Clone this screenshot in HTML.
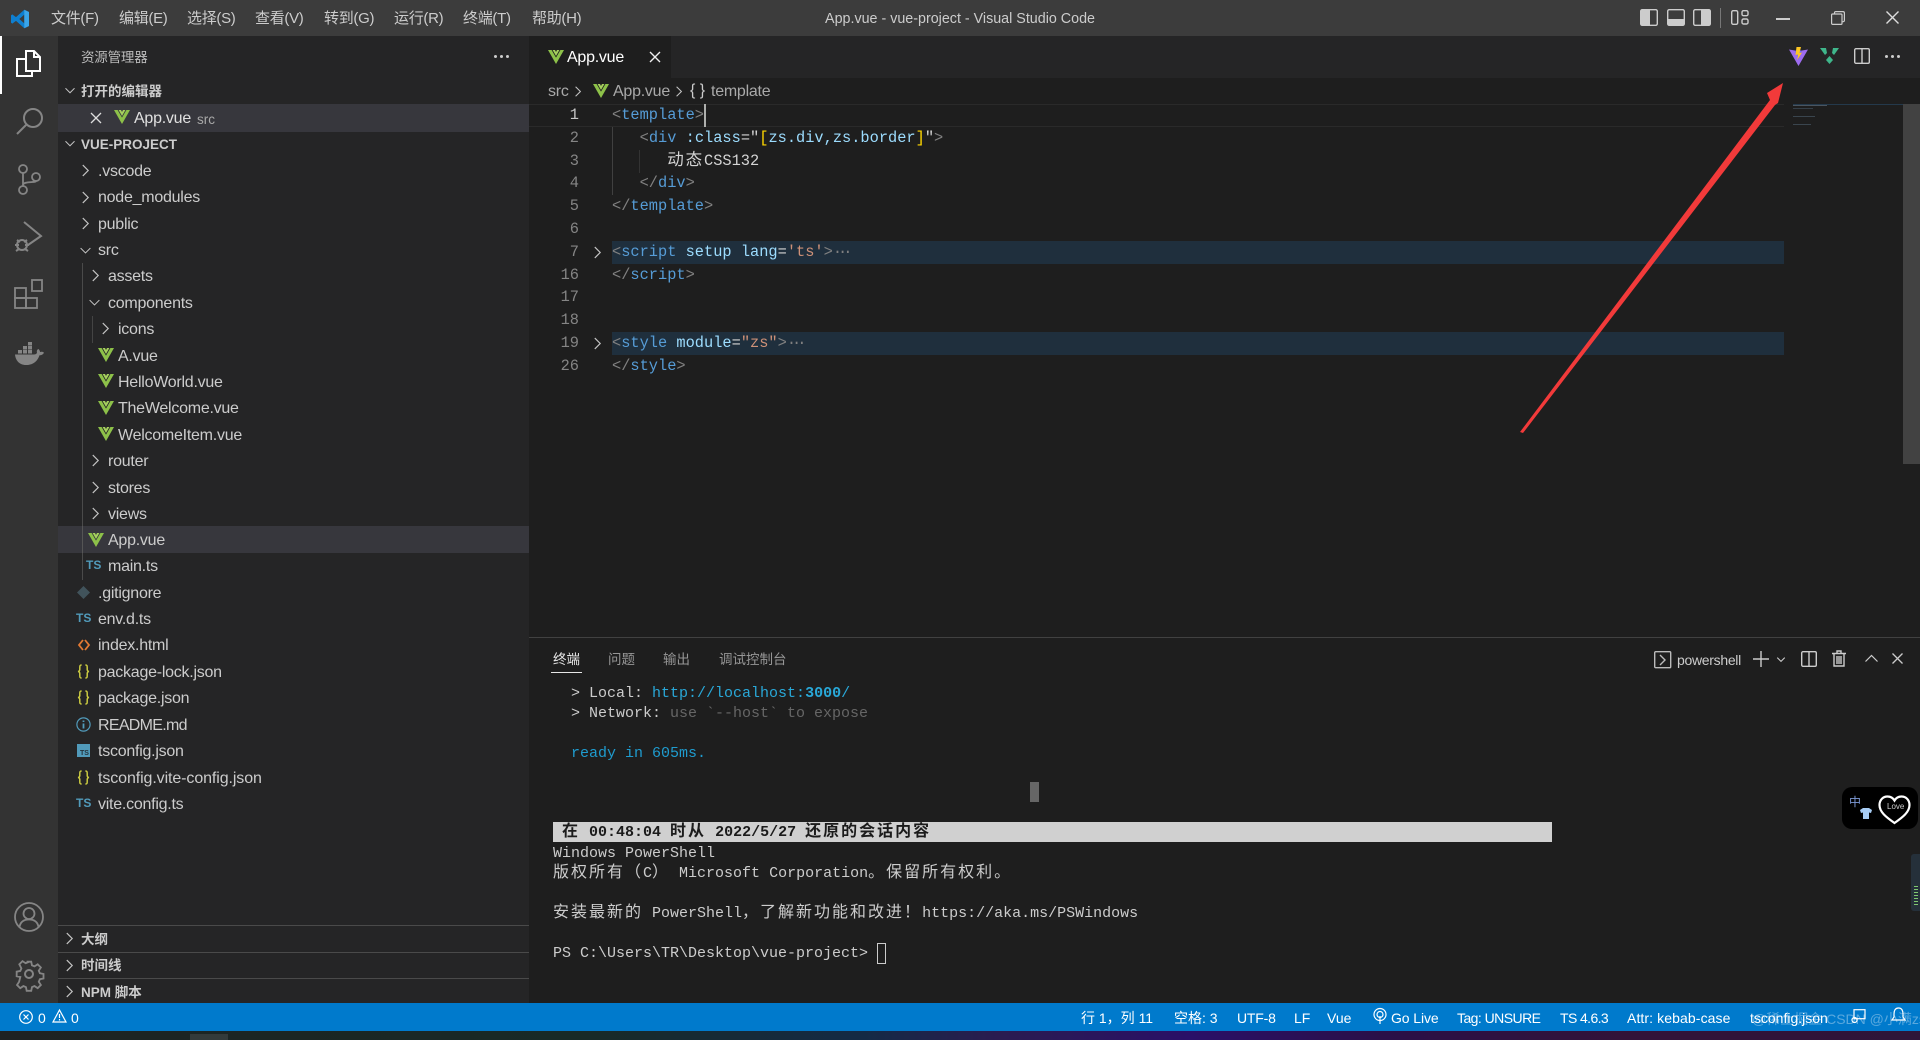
<!DOCTYPE html>
<html lang="zh-CN">
<head>
<meta charset="utf-8">
<title>App.vue - vue-project - Visual Studio Code</title>
<style>
html,body{margin:0;padding:0;background:#1e1e1e}
body{width:1920px;height:1040px;position:relative;overflow:hidden;font-family:"Liberation Sans","Noto Sans CJK SC",sans-serif;color:#ccc}
.a{position:absolute}
.t{position:absolute;white-space:pre;line-height:1;transform:translateY(1px)}
svg{position:absolute;overflow:visible}
.row{position:absolute;white-space:pre;font-size:16px;line-height:20px;color:#ccc;letter-spacing:-.25px;transform:translateY(1px)}
.hd{position:absolute;white-space:pre;font-size:13.5px;line-height:18px;font-weight:700;color:#ccc;transform:translateY(1px)}
.m{position:absolute;top:10px;font-size:15px;line-height:18px;color:#ccc;white-space:pre;letter-spacing:-.3px}
.ln{position:absolute;left:540px;width:39px;text-align:right;font:15.33px/23px "Liberation Mono",monospace;color:#858585;transform:translateY(1px)}
.cd{position:absolute;left:612px;white-space:pre;font:15.33px/23px "Liberation Mono","Noto Sans CJK SC",monospace;color:#d4d4d4;transform:translateY(1px)}
.g{color:#808080}.b{color:#569cd6}.l{color:#9cdcfe}.s{color:#ce9178}.y{color:#ffd700}
.e{color:#808080;letter-spacing:-4px}
.tm{position:absolute;left:553px;white-space:pre;font:15px/20px "Liberation Mono","Noto Sans CJK SC",monospace;color:#ccc;transform:translateY(1px)}
.c{font-size:16px;letter-spacing:2px;line-height:18px}
.st{position:absolute;top:1009px;font-size:14px;line-height:18px;color:#fff;white-space:pre}
.ic{fill:none;stroke:#858585;stroke-width:1.5}
</style>
</head>
<body>
<svg width="0" height="0" style="position:absolute">
<symbol id="vue" viewBox="0 0 16 14"><path fill="#8dc149" d="M0 0h3.600L8 7.600 12.400 0H16L8 14z"/><path fill="#a6d05e" d="M4.600 0H7L8 2 9 0h2.400L8 6z"/></symbol>
<symbol id="chr" viewBox="0 0 10 16"><path d="M2 2l6 6-6 6" fill="none" stroke="#c5c5c5" stroke-width="1.300"/></symbol>
<symbol id="chd" viewBox="0 0 16 10"><path d="M2 2l6 6 6-6" fill="none" stroke="#c5c5c5" stroke-width="1.300"/></symbol>
<symbol id="brace" viewBox="0 0 14 16"><path d="M5 1C3 1 3 2 3 4v2C3 7 2 8 1 8c1 0 2 1 2 2v2c0 2 0 3 2 3M9 1c2 0 2 1 2 3v2c0 1 1 2 2 2-1 0-2 1-2 2v2c0 2 0 3-2 3" fill="none" stroke="#cbcb41" stroke-width="1.600"/></symbol>
</svg>

<!-- title bar -->
<div class="a" style="left:0;top:0;width:1920px;height:36px;background:#3c3c3c"></div>
<svg style="left:10px;top:9px" width="20" height="20" viewBox="0 0 20 20"><path fill="#0e7fd0" d="M14.300 0.800L19 3v14l-4.700 2.200-8.300-7.300-3.700 2.700L1 13.600V6.400l1.300-1 3.700 2.700zM14.300 5.600L9.300 10l5 4.400z"/><path fill="#3aa5ea" d="M14.300 .8L19 3v14l-4.700 2.200z"/></svg>
<div class="m" style="left:51px">文件(F)</div>
<div class="m" style="left:119px">编辑(E)</div>
<div class="m" style="left:187px">选择(S)</div>
<div class="m" style="left:255px">查看(V)</div>
<div class="m" style="left:324px">转到(G)</div>
<div class="m" style="left:394px">运行(R)</div>
<div class="m" style="left:463px">终端(T)</div>
<div class="m" style="left:532px">帮助(H)</div>
<div class="t" style="left:0;width:1920px;text-align:center;top:11px;font-size:14.300px;color:#ccc">App.vue - vue-project - Visual Studio Code</div>

<svg style="left:1640px;top:9px" width="18" height="17" viewBox="0 0 18 17"><rect x=".7" y=".7" width="16.600" height="15.600" rx="1.500" fill="none" stroke="#ccc" stroke-width="1.400"/><rect x="1" y="1" width="9" height="15" fill="#ccc"/></svg>
<svg style="left:1667px;top:9px" width="18" height="17" viewBox="0 0 18 17"><rect x=".7" y=".7" width="16.600" height="15.600" rx="1.500" fill="none" stroke="#ccc" stroke-width="1.400"/><rect x="1" y="10" width="16" height="6" fill="#ccc"/></svg>
<svg style="left:1693px;top:9px" width="18" height="17" viewBox="0 0 18 17"><rect x=".7" y=".7" width="16.600" height="15.600" rx="1.500" fill="none" stroke="#ccc" stroke-width="1.400"/><rect x="8" y="1" width="9" height="15" fill="#ccc"/></svg>
<div class="a" style="left:1720px;top:8px;width:1px;height:20px;background:#777"></div>
<svg style="left:1731px;top:9px" width="18" height="17" viewBox="0 0 18 17" fill="none" stroke="#ccc" stroke-width="1.400"><rect x=".7" y="1.700" width="6" height="13.600" rx="1.500"/><rect x="11" y="1.700" width="6" height="5" rx="1.500"/><rect x="11" y="10" width="6" height="5" rx="1.500"/></svg>
<div class="a" style="left:1776px;top:18px;width:14px;height:1.500px;background:#ccc"></div>
<svg style="left:1831px;top:11px" width="14" height="14" viewBox="0 0 14 14" fill="none" stroke="#ccc" stroke-width="1.200"><rect x=".6" y="3" width="10.400" height="10.400" rx="1"/><path d="M3.500 3V1.800Q3.500.6 4.700.6H12Q13.400.6 13.400 2V9.500Q13.400 10.800 11 10.800"/></svg>
<svg style="left:1886px;top:11px" width="13" height="13" viewBox="0 0 13 13"><path d="M.5.500l12 12M12.500.500l-12 12" stroke="#ddd" stroke-width="1.400"/></svg>

<!-- activity bar -->
<div class="a" style="left:0;top:36px;width:58px;height:967px;background:#333"></div>
<div class="a" style="left:0;top:36px;width:2px;height:58px;background:#fff"></div>
<svg style="left:15px;top:48px" width="28" height="30" viewBox="0 0 28 30" fill="none" stroke="#fff" stroke-width="2"><path d="M11 3h8l6 6v14H11z"/><path d="M19 3v6h6"/><path d="M11 11H2v17h15v-5" /></svg>
<svg class="ic" style="left:15px;top:106px;stroke-width:2" width="30" height="30" viewBox="0 0 30 30"><circle cx="18" cy="12" r="9"/><path d="M11.500 18.500L2 28"/></svg>
<svg class="ic" style="left:16px;top:164px;stroke-width:1.800" width="26" height="30" viewBox="0 0 26 30"><circle cx="7" cy="5" r="4"/><circle cx="7" cy="26" r="4"/><circle cx="20" cy="13" r="4"/><path d="M7 9v13M7 21c0-4 13-2 13-4"/></svg>
<svg class="ic" style="left:14px;top:221px;stroke-width:2" width="30" height="32" viewBox="0 0 30 32"><path d="M10 1l17 14-13 9"/><circle cx="8" cy="24" r="5"/><path d="M3 19l3 2M13 19l-3 2M1 24h4M11 24h4M2 30l3-2M14 30l-3-2"/></svg>
<svg class="ic" style="left:14px;top:279px;stroke-width:1.800" width="30" height="30" viewBox="0 0 30 30"><rect x="1" y="9" width="11" height="10"/><rect x="1" y="19" width="11" height="10"/><rect x="12" y="19" width="11" height="10"/><rect x="18" y="1" width="10" height="11"/></svg>
<svg style="left:15px;top:342px" width="29" height="24" viewBox="0 0 29 24"><g fill="#858585"><rect x="3" y="8" width="4" height="3.500"/><rect x="8" y="8" width="4" height="3.500"/><rect x="13" y="8" width="4" height="3.500"/><rect x="8" y="4" width="4" height="3.500"/><rect x="13" y="4" width="4" height="3.500"/><rect x="13" y="0" width="4" height="3.500"/><path d="M0 12.500h19c1 0 2-.3 3-1.500-.5-2 0-3.500 1.500-4 1 1 1.500 2 1.500 3 1.500-.5 3-.3 4 .7-1 2-3 2.700-4.500 2.500C23 18 19 23 11 23 4 23 .5 18 0 12.500z"/></g></svg>
<svg class="ic" style="left:14px;top:902px;stroke-width:1.800" width="30" height="30" viewBox="0 0 30 30"><circle cx="15" cy="15" r="14"/><circle cx="15" cy="11.500" r="5.500"/><path d="M5.500 25c1-6 5-7.500 9.500-7.500s8.500 1.500 9.500 7.500"/></svg>
<svg class="ic" style="left:14px;top:959px;stroke-width:2" width="30" height="30" viewBox="0 0 30 30"><circle cx="15" cy="15" r="4"/><path d="M12.500 1.500h5l.8 4 2.800 1.200 3.500-2.300 3.500 3.500-2.300 3.500 1.200 2.800 4 .8v5l-4 .8-1.200 2.800 2.300 3.500-3.500 3.500-3.500-2.300-2.800 1.200-.8 4h-5l-.8-4-2.800-1.200-3.500 2.300-3.500-3.500 2.300-3.500L5.500 18.300l-4-.8v-5l4-.8 1.200-2.800L4.400 4.400l3.500-3.500 3.500 2.300 2.800-1.200z" transform="translate(1.300 1.300) scale(.91)"/></svg>

<!-- sidebar -->
<div class="a" style="left:58px;top:36px;width:471px;height:967px;background:#252526"></div>
<div class="t" style="left:81px;top:50px;font-size:13.500px;color:#bbb;letter-spacing:-.2px">资源管理器</div>
<div class="a" style="left:494px;top:55px;width:3px;height:3px;background:#ccc;border-radius:50%;box-shadow:6px 0 0 #ccc,12px 0 0 #ccc"></div>

<svg style="left:64px;top:86px" width="12" height="9"><use href="#chd" width="12" height="9"/></svg>
<div class="hd" style="left:81px;top:82px">打开的编辑器</div>
<div class="a" style="left:58px;top:104px;width:471px;height:28px;background:#37373d"></div>
<svg style="left:90px;top:112px" width="12" height="12" viewBox="0 0 12 12"><path d="M1 1l10 10M11 1L1 11" stroke="#ddd" stroke-width="1.300"/></svg>
<svg style="left:114px;top:110px" width="16" height="14"><use href="#vue" width="16" height="14"/></svg>
<div class="row" style="left:134px;top:108px;color:#e0e0e0">App.vue</div>
<div class="t" style="left:197px;top:112px;font-size:13.500px;color:#a8a8a8">src</div>

<svg style="left:64px;top:139px" width="12" height="9"><use href="#chd" width="12" height="9"/></svg>
<div class="hd" style="left:81px;top:135px">VUE-PROJECT</div>

<div class="a" style="left:82px;top:263px;width:1px;height:317px;background:#4a4a4a"></div>
<div class="a" style="left:92px;top:316px;width:1px;height:27px;background:#444"></div>

<svg style="left:81px;top:163px" width="9" height="15"><use href="#chr" width="9" height="15"/></svg><div class="row" style="left:98px;top:161px">.vscode</div>
<svg style="left:81px;top:190px" width="9" height="15"><use href="#chr" width="9" height="15"/></svg><div class="row" style="left:98px;top:187px">node_modules</div>
<svg style="left:81px;top:216px" width="9" height="15"><use href="#chr" width="9" height="15"/></svg><div class="row" style="left:98px;top:214px">public</div>
<svg style="left:79px;top:246px" width="13" height="9"><use href="#chd" width="13" height="9"/></svg><div class="row" style="left:98px;top:240px">src</div>
<svg style="left:91px;top:268px" width="9" height="15"><use href="#chr" width="9" height="15"/></svg><div class="row" style="left:108px;top:266px">assets</div>
<svg style="left:88px;top:298px" width="13" height="9"><use href="#chd" width="13" height="9"/></svg><div class="row" style="left:108px;top:293px">components</div>
<svg style="left:101px;top:321px" width="9" height="15"><use href="#chr" width="9" height="15"/></svg><div class="row" style="left:118px;top:319px">icons</div>
<svg style="left:98px;top:348px" width="16" height="14"><use href="#vue" width="16" height="14"/></svg><div class="row" style="left:118px;top:346px">A.vue</div>
<svg style="left:98px;top:374px" width="16" height="14"><use href="#vue" width="16" height="14"/></svg><div class="row" style="left:118px;top:372px">HelloWorld.vue</div>
<svg style="left:98px;top:401px" width="16" height="14"><use href="#vue" width="16" height="14"/></svg><div class="row" style="left:118px;top:398px">TheWelcome.vue</div>
<svg style="left:98px;top:427px" width="16" height="14"><use href="#vue" width="16" height="14"/></svg><div class="row" style="left:118px;top:425px">WelcomeItem.vue</div>
<svg style="left:91px;top:453px" width="9" height="15"><use href="#chr" width="9" height="15"/></svg><div class="row" style="left:108px;top:451px">router</div>
<svg style="left:91px;top:480px" width="9" height="15"><use href="#chr" width="9" height="15"/></svg><div class="row" style="left:108px;top:478px">stores</div>
<svg style="left:91px;top:506px" width="9" height="15"><use href="#chr" width="9" height="15"/></svg><div class="row" style="left:108px;top:504px">views</div>
<div class="a" style="left:58px;top:526px;width:471px;height:27px;background:#37373d"></div>
<div class="a" style="left:82px;top:526px;width:1px;height:27px;background:#555"></div>
<svg style="left:88px;top:533px" width="16" height="14"><use href="#vue" width="16" height="14"/></svg><div class="row" style="left:108px;top:530px">App.vue</div>
<div class="t" style="left:86px;top:558px;font-size:12px;font-weight:700;color:#519aba">TS</div><div class="row" style="left:108px;top:556px">main.ts</div>
<svg style="left:77px;top:586px" width="13" height="13" viewBox="0 0 13 13"><path d="M6.500 0L13 6.500 6.500 13 0 6.500z" fill="#41535b"/></svg><div class="row" style="left:98px;top:583px">.gitignore</div>
<div class="t" style="left:76px;top:611px;font-size:12px;font-weight:700;color:#519aba">TS</div><div class="row" style="left:98px;top:609px">env.d.ts</div>
<svg style="left:78px;top:639px" width="12" height="12" viewBox="0 0 12 12"><path d="M5 1L1 6l4 5M7 1l4 5-4 5" fill="none" stroke="#e37933" stroke-width="1.800"/></svg><div class="row" style="left:98px;top:635px">index.html</div>
<svg style="left:77px;top:664px" width="13" height="15"><use href="#brace" width="13" height="15"/></svg><div class="row" style="left:98px;top:662px">package-lock.json</div>
<svg style="left:77px;top:690px" width="13" height="15"><use href="#brace" width="13" height="15"/></svg><div class="row" style="left:98px;top:688px">package.json</div>
<svg style="left:76px;top:717px" width="15" height="15" viewBox="0 0 15 15"><circle cx="7.500" cy="7.500" r="6.600" fill="none" stroke="#519aba" stroke-width="1.200"/><path d="M7.500 3.500v1.500M7.500 6.500v5" stroke="#519aba" stroke-width="1.800"/></svg><div class="row" style="left:98px;top:715px;letter-spacing:-.7px">README.md</div>
<div class="a" style="left:77px;top:744px;width:13px;height:13px;background:#519aba"></div><div class="t" style="left:80px;top:749px;font-size:7px;font-weight:700;color:#25323a">TS</div><div class="row" style="left:98px;top:741px">tsconfig.json</div>
<svg style="left:77px;top:770px" width="13" height="15"><use href="#brace" width="13" height="15"/></svg><div class="row" style="left:98px;top:768px;letter-spacing:-.1px">tsconfig.vite-config.json</div>
<div class="t" style="left:76px;top:796px;font-size:12px;font-weight:700;color:#519aba">TS</div><div class="row" style="left:98px;top:794px">vite.config.ts</div>

<div class="a" style="left:58px;top:925px;width:471px;height:1px;background:#4a4a4a"></div>
<div class="a" style="left:58px;top:952px;width:471px;height:1px;background:#4a4a4a"></div>
<div class="a" style="left:58px;top:978px;width:471px;height:1px;background:#4a4a4a"></div>
<svg style="left:65px;top:931px" width="9" height="15"><use href="#chr" width="9" height="15"/></svg><div class="hd" style="left:81px;top:930px">大纲</div>
<svg style="left:65px;top:958px" width="9" height="15"><use href="#chr" width="9" height="15"/></svg><div class="hd" style="left:81px;top:956px">时间线</div>
<svg style="left:65px;top:984px" width="9" height="15"><use href="#chr" width="9" height="15"/></svg><div class="hd" style="left:81px;top:983px">NPM 脚本</div>

<!-- tab bar -->
<div class="a" style="left:529px;top:36px;width:1391px;height:42px;background:#252526"></div>
<div class="a" style="left:529px;top:36px;width:142px;height:42px;background:#1e1e1e"></div>
<svg style="left:548px;top:50px" width="16" height="14"><use href="#vue" width="16" height="14"/></svg>
<div class="row" style="left:567px;top:47px;color:#fff">App.vue</div>
<svg style="left:649px;top:51px" width="12" height="12" viewBox="0 0 12 12"><path d="M1 1l10 10M11 1L1 11" stroke="#eee" stroke-width="1.400"/></svg>

<svg style="left:1789px;top:47px" width="19" height="19" viewBox="0 0 19 19"><path d="M0 2.500L9.500 19 19 2.500 13 3.500 9.500 12 6 3.500z" fill="#9e6cf0"/><path d="M6 3.500L9.500 13 13 3.500z" fill="#7d6cf0"/><path d="M7.500 0l-1 8 2.500-.5L8.300 13 13 5.500 10.500 6l1.500-6z" fill="#fdc623"/></svg>
<svg style="left:1820px;top:47px" width="19" height="17" viewBox="0 0 19 17"><path d="M0 1l6 0 1 5-2 2z M19 1l-6 0-1 5 2 2z M9.500 9l3.500 4-3.500 4L6 13z" fill="#3fb68b"/></svg>
<svg style="left:1854px;top:48px" width="16" height="16" viewBox="0 0 16 16" fill="none" stroke="#ccc" stroke-width="1.400"><rect x=".7" y=".7" width="14.600" height="14.600" rx="1.300"/><path d="M8 1v14"/></svg>
<div class="a" style="left:1885px;top:55px;width:3px;height:3px;background:#ccc;border-radius:50%;box-shadow:6px 0 0 #ccc,12px 0 0 #ccc"></div>

<!-- breadcrumb -->
<div class="row" style="left:548px;top:81px;color:#a9a9a9">src</div>
<svg style="left:574px;top:85px" width="8" height="13"><use href="#chr" width="8" height="13"/></svg>
<svg style="left:593px;top:84px" width="16" height="14"><use href="#vue" width="16" height="14"/></svg>
<div class="row" style="left:613px;top:81px;color:#a9a9a9">App.vue</div>
<svg style="left:675px;top:85px" width="8" height="13"><use href="#chr" width="8" height="13"/></svg>
<div class="t" style="left:690px;top:82px;font-size:16px;color:#ccc">{ }</div>
<div class="row" style="left:711px;top:81px;color:#a9a9a9">template</div>

<!-- editor -->
<div class="a" style="left:529px;top:104px;width:1255px;height:1px;background:#2a2a2a"></div>
<div class="a" style="left:529px;top:126px;width:1255px;height:1px;background:#2a2a2a"></div>
<div class="a" style="left:612px;top:241px;width:1172px;height:23px;background:#1f2f3d"></div>
<div class="a" style="left:612px;top:332px;width:1172px;height:23px;background:#1f2f3d"></div>
<div class="a" style="left:612px;top:127px;width:1px;height:68px;background:#404040"></div>
<div class="a" style="left:639px;top:150px;width:1px;height:23px;background:#333"></div>
<div class="a" style="left:704px;top:104px;width:2px;height:23px;background:#aeafad"></div>

<div class="ln" style="top:103px;color:#c6c6c6">1</div>
<div class="ln" style="top:126px">2</div>
<div class="ln" style="top:149px">3</div>
<div class="ln" style="top:171px">4</div>
<div class="ln" style="top:194px">5</div>
<div class="ln" style="top:217px">6</div>
<div class="ln" style="top:240px">7</div>
<div class="ln" style="top:263px">16</div>
<div class="ln" style="top:285px">17</div>
<div class="ln" style="top:308px">18</div>
<div class="ln" style="top:331px">19</div>
<div class="ln" style="top:354px">26</div>
<svg style="left:593px;top:245px" width="9" height="15"><use href="#chr" width="9" height="15"/></svg>
<svg style="left:593px;top:336px" width="9" height="15"><use href="#chr" width="9" height="15"/></svg>

<div class="cd" style="top:103px"><span class="g">&lt;</span><span class="b">template</span><span class="g">&gt;</span></div>
<div class="cd" style="top:126px">  <span class="g"> </span><span class="g">&lt;</span><span class="b">div</span> <span class="l">:class</span>=<span style="color:#d4d4d4">"</span><span class="y">[</span><span class="l">zs.div,zs.border</span><span class="y">]</span><span style="color:#d4d4d4">"</span><span class="g">&gt;</span></div>
<div class="cd" style="top:149px">      <span style="font-size:16.500px;letter-spacing:1.900px;line-height:20px">动态</span>CSS132</div>
<div class="cd" style="top:171px">   <span class="g">&lt;/</span><span class="b">div</span><span class="g">&gt;</span></div>
<div class="cd" style="top:194px"><span class="g">&lt;/</span><span class="b">template</span><span class="g">&gt;</span></div>
<div class="cd" style="top:240px"><span class="g">&lt;</span><span class="b">script</span> <span class="l">setup</span> <span class="l">lang</span>=<span class="s">'ts'</span><span class="g">&gt;</span><span class="e">···</span></div>
<div class="cd" style="top:263px"><span class="g">&lt;/</span><span class="b">script</span><span class="g">&gt;</span></div>
<div class="cd" style="top:331px"><span class="g">&lt;</span><span class="b">style</span> <span class="l">module</span>=<span class="s">"zs"</span><span class="g">&gt;</span><span class="e">···</span></div>
<div class="cd" style="top:354px"><span class="g">&lt;/</span><span class="b">style</span><span class="g">&gt;</span></div>

<!-- minimap -->
<div class="a" style="left:1793px;top:104px;width:110px;height:1px;background:#24394b"></div>
<div class="a" style="left:1793px;top:105px;width:34px;height:1px;background:#4a5560"></div>
<div class="a" style="left:1793px;top:108px;width:20px;height:1px;background:#353f48"></div>
<div class="a" style="left:1793px;top:116px;width:22px;height:1px;background:#3a454e"></div>
<div class="a" style="left:1793px;top:124px;width:18px;height:1px;background:#3a454e"></div>
<div class="a" style="left:1903px;top:104px;width:17px;height:360px;background:#424242"></div>

<!-- red arrow -->
<svg style="left:0;top:0" width="1920" height="1040"><path d="M1520 432L1770 100 1767 93 1783 83 1778 103 1775 105 1523 433z" fill="#f23a3a"/></svg>

<!-- panel -->
<div class="a" style="left:529px;top:637px;width:1391px;height:1px;background:#414141"></div>
<div class="t" style="left:553px;top:652px;font-size:13.500px;color:#e7e7e7">终端</div>
<div class="a" style="left:551px;top:672px;width:31px;height:1px;background:#e7e7e7"></div>
<div class="t" style="left:608px;top:652px;font-size:13.500px;color:#969696">问题</div>
<div class="t" style="left:663px;top:652px;font-size:13.500px;color:#969696">输出</div>
<div class="t" style="left:719px;top:652px;font-size:13.500px;color:#969696">调试控制台</div>

<svg style="left:1654px;top:651px" width="18" height="18" viewBox="0 0 18 18" fill="none" stroke="#bbb" stroke-width="1.400"><rect x=".7" y=".7" width="16" height="16" rx="1"/><path d="M6 4l5 5-5 5"/></svg>
<div class="t" style="left:1677px;top:652px;font-size:14px;color:#ccc;letter-spacing:-.3px">powershell</div>
<svg style="left:1753px;top:651px" width="16" height="16"><path d="M8 0v16M0 8h16" stroke="#ccc" stroke-width="1.400"/></svg>
<svg style="left:1776px;top:656px" width="10" height="7" viewBox="0 0 16 10"><path d="M2 2l6 6 6-6" fill="none" stroke="#ccc" stroke-width="1.800"/></svg>
<svg style="left:1801px;top:651px" width="16" height="16" viewBox="0 0 16 16" fill="none" stroke="#ccc" stroke-width="1.400"><rect x=".7" y=".7" width="14.600" height="14.600" rx="1.300"/><path d="M8 1v14"/></svg>
<svg style="left:1832px;top:650px" width="14" height="17" viewBox="0 0 14 17" fill="none" stroke="#ccc" stroke-width="1.400"><path d="M0 3.500h14M5 3.500V1h4v2.500M2 3.500V16h10V3.500M5 6v8M7 6v8M9 6v8"/></svg>
<svg style="left:1865px;top:654px" width="13" height="8" viewBox="0 0 13 8"><path d="M.5 7.500l6-6 6 6" fill="none" stroke="#ccc" stroke-width="1.200"/></svg>
<svg style="left:1892px;top:653px" width="11" height="11" viewBox="0 0 11 11"><path d="M.5.500l10 10M10.500.500l-10 10" stroke="#ccc" stroke-width="1.300"/></svg>

<!-- terminal -->
<div class="tm" style="top:683px">  &gt; Local: <span style="color:#29a8d8">http://localhost:<b>3000</b>/</span></div>
<div class="tm" style="top:703px">  &gt; Network: <span style="color:#666">use `--host` to expose</span></div>
<div class="tm" style="top:743px;color:#1f9ccf">  ready in 605ms.</div>
<div class="a" style="left:1030px;top:782px;width:9px;height:20px;background:#666"></div>
<div class="a" style="left:553px;top:822px;width:999px;height:20px;background:#d0d0d0"></div>
<div class="tm" style="top:822px;color:#1b1b1b;font-weight:700"> <span class="c">在</span> 00:48:04 <span class="c">时从</span> 2022/5/27 <span class="c">还原的会话内容</span></div>
<div class="tm" style="top:843px">Windows PowerShell</div>
<div class="tm" style="top:863px"><span class="c">版权所有（</span>C<span class="c">）</span> Microsoft Corporation<span class="c">。保留所有权利。</span></div>
<div class="tm" style="top:903px"><span class="c">安装最新的</span> PowerShell<span class="c">，了解新功能和改进！</span>https://aka.ms/PSWindows</div>
<div class="tm" style="top:943px">PS C:\Users\TR\Desktop\vue-project&gt; </div>
<div class="a" style="left:877px;top:943px;width:7px;height:19px;border:1px solid #ccc"></div>

<!-- floating widgets -->
<div class="a" style="left:1842px;top:787px;width:76px;height:42px;background:#000;border-radius:10px"></div>
<div class="t" style="left:1849px;top:795px;font-size:12px;color:#7d9ad6">中</div>
<svg style="left:1860px;top:808px" width="12" height="11" viewBox="0 0 12 11"><path d="M0 2L3 0h6l3 2-1 3-2-.5V11H3V4.500L1 5z" fill="#a8cdf5"/></svg>
<svg style="left:1878px;top:795px" width="33" height="30" viewBox="0 0 33 30"><path d="M16.500 28C8 22 1.500 17 1.500 10 1.500 5 5 1.500 9.500 1.500c3 0 5.500 1.500 7 4 1.500-2.500 4-4 7-4 4.500 0 8 3.500 8 8.500 0 7-6.500 12-15 18z" fill="#000" stroke="#fff" stroke-width="2.200"/></svg>
<div class="t" style="left:1887px;top:802px;font-size:8px;color:#ccc">Love</div>
<div class="a" style="left:1911px;top:854px;width:9px;height:57px;background:#25303a;border-radius:3px 0 0 3px"></div>
<div class="a" style="left:1914px;top:886px;width:4px;height:20px;background:repeating-linear-gradient(#7fc870 0 1px,#25303a 1px 3px)"></div>

<!-- status bar -->
<div class="a" style="left:0;top:1003px;width:1920px;height:28px;background:#007acc"></div>
<svg style="left:19px;top:1010px" width="14" height="14" viewBox="0 0 14 14" fill="none" stroke="#fff" stroke-width="1.200"><circle cx="7" cy="7" r="6.300"/><path d="M4.500 4.500l5 5M9.500 4.500l-5 5"/></svg>
<div class="st" style="left:38px">0</div>
<svg style="left:52px;top:1009px" width="15" height="14" viewBox="0 0 15 14" fill="none" stroke="#fff" stroke-width="1.200"><path d="M7.500 1L14 13H1zM7.500 5v4M7.500 10v1.500"/></svg>
<div class="st" style="left:71px">0</div>
<div class="st" style="left:1081px">行 1，列 11</div>
<div class="st" style="left:1174px">空格: 3</div>
<div class="st" style="left:1237px;letter-spacing:-.2px">UTF-8</div>
<div class="st" style="left:1294px">LF</div>
<div class="st" style="left:1327px">Vue</div>
<svg style="left:1373px;top:1008px" width="14" height="17" viewBox="0 0 14 17" fill="none" stroke="#fff" stroke-width="1.200"><circle cx="7" cy="6.500" r="6"/><circle cx="7" cy="6.500" r="3"/><path d="M7 8v8"/></svg>
<div class="st" style="left:1391px;letter-spacing:-.1px">Go Live</div>
<div class="st" style="left:1457px;letter-spacing:-.55px">Tag: UNSURE</div>
<div class="st" style="left:1560px;letter-spacing:-.6px">TS 4.6.3</div>
<div class="st" style="left:1627px;letter-spacing:.1px">Attr: kebab-case</div>
<div class="st" style="left:1750px">tsconfig.json</div>
<svg style="left:1851px;top:1009px" width="15" height="15" viewBox="0 0 15 15" fill="none" stroke="#fff" stroke-width="1.200"><rect x="3" y=".7" width="11" height="9"/><circle cx="3.500" cy="11" r="2.500"/></svg>
<svg style="left:1892px;top:1008px" width="13" height="16" viewBox="0 0 13 16" fill="#fff"><path d="M6.500 0C3 0 2 3 2 6v3L0 12h13l-2-3V6c0-3-1-6-4.500-6z" fill="none" stroke="#fff" stroke-width="1.200"/></svg>
<div class="t" style="left:1752px;top:1011px;font-size:14px;color:rgba(255,255,255,.35)">@稀土掘金 CSDN @小满zs</div>

<!-- desktop strip -->
<div class="a" style="left:0;top:1031px;width:1920px;height:9px;background:linear-gradient(90deg,#1e2222 0,#182a26 30%,#142a45 45%,#2a1c50 52%,#2a1068 62%,#2a1048 72%,#321338 85%,#2e1538 100%)"></div>
<div class="a" style="left:190px;top:1034px;width:38px;height:6px;background:#333a3a"></div>
</body>
</html>
